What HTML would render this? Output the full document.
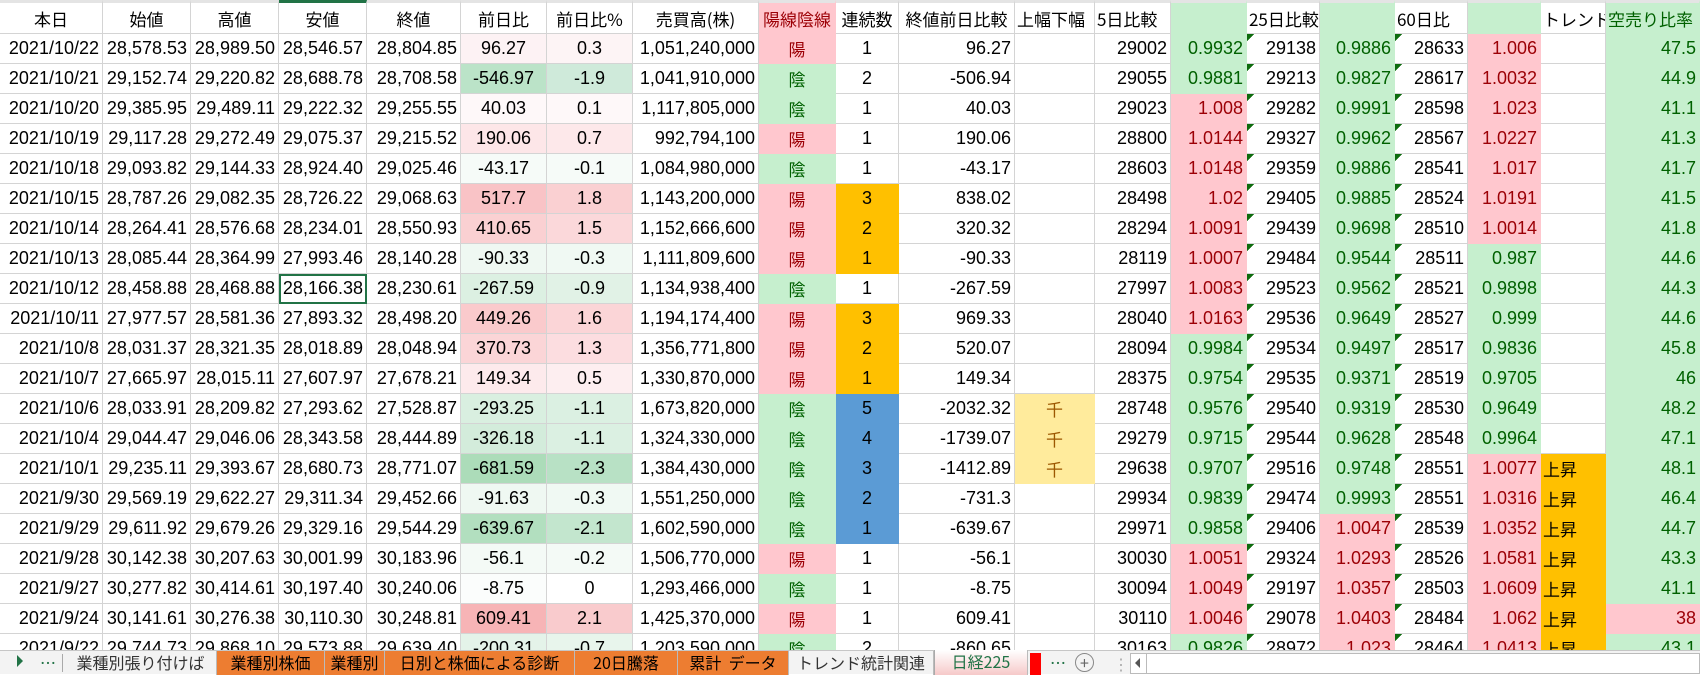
<!DOCTYPE html>
<html><head><meta charset="utf-8"><style>
*{margin:0;padding:0;box-sizing:border-box}
body{width:1700px;height:674px;overflow:hidden;background:#fff;font-family:"Liberation Sans","Noto Sans CJK JP",sans-serif;font-size:18px;color:#000;position:relative}
#wrap{position:absolute;left:0;top:0;width:1700px;height:650px;overflow:hidden}
table{border-collapse:separate;border-spacing:0;table-layout:fixed;width:1700px}
td{border-right:1px solid #d4d4d4;border-bottom:1px solid #d4d4d4;height:30px;text-align:right;padding:0 3px 0 0;white-space:nowrap;overflow:hidden;font-family:"Liberation Sans","Noto Sans CJK JP",sans-serif}
tr.h td{height:34px;border-top:3px solid #e4e4e4;text-align:center;padding:0;font-family:"Noto Sans CJK JP",sans-serif;font-size:17px}
tr.h td.l{text-align:left;padding-left:2px}
.c{text-align:center;padding:0}
.p{background:#ffc7ce;color:#9c0006;border-color:#ffc7ce}
.g{background:#c6efce;color:#006100;border-color:#c6efce}
.o{background:#ffc000;border-color:#ffc000}
.b{background:#5b9bd5;border-color:#5b9bd5}
.y{background:#ffeb9c;color:#9c5700;border-color:#ffeb9c}
.j{font-family:"Noto Sans CJK JP",sans-serif;font-size:17px}
.t{background-image:linear-gradient(135deg,#0e6b0e 5px,transparent 5px);background-repeat:no-repeat;background-size:8px 8px}
.sel{outline:2px solid #217346;outline-offset:-2px}
#tabs{position:absolute;left:0;top:650px;width:1700px;height:24px;background:#f3f3f3;border-top:1px solid #c6c6c6;font-family:"Noto Sans CJK JP",sans-serif;font-size:16px}
.tab{position:absolute;top:0;height:24px;line-height:22px;text-align:center;border-right:1px solid #bbb;color:#333}
.or{background:#ed7d31;color:#000}
</style></head><body>
<div id="wrap"><table>
<colgroup><col style="width:103px"><col style="width:88px"><col style="width:88px"><col style="width:88px"><col style="width:94px"><col style="width:86px"><col style="width:86px"><col style="width:126px"><col style="width:77px"><col style="width:63px"><col style="width:116px"><col style="width:80px"><col style="width:76px"><col style="width:76px"><col style="width:73px"><col style="width:75px"><col style="width:73px"><col style="width:73px"><col style="width:65px"><col style="width:94px"></colgroup>
<tr class="h"><td>本日</td><td>始値</td><td>高値</td><td style="border-top-color:#217346">安値</td><td>終値</td><td>前日比</td><td>前日比%</td><td>売買高(株)</td><td class="p">陽線陰線</td><td>連続数</td><td>終値前日比較</td><td class="l">上幅下幅</td><td class="l">5日比較</td><td class="g"></td><td class="l">25日比較</td><td class="g"></td><td class="l">60日比</td><td class="g"></td><td class="l">トレンド</td><td class="g l">空売り比率</td></tr>
<tr><td>2021/10/22</td><td>28,578.53</td><td>28,989.50</td><td>28,546.57</td><td>28,804.85</td><td class="c" style="background:#fdf2f4">96.27</td><td class="c" style="background:#fdf4f5">0.3</td><td>1,051,240,000</td><td class="p c j">陽</td><td class="c">1</td><td>96.27</td><td></td><td>29002</td><td class="g">0.9932</td><td class="t">29138</td><td class="g">0.9886</td><td class="t">28633</td><td class="p">1.006</td><td></td><td class="g">47.5</td></tr>
<tr><td>2021/10/21</td><td>29,152.74</td><td>29,220.82</td><td>28,688.78</td><td>28,708.58</td><td class="c" style="background:#bbe3c8">-546.97</td><td class="c" style="background:#cfeada">-1.9</td><td>1,041,910,000</td><td class="g c j">陰</td><td class="c">2</td><td>-506.94</td><td></td><td>29055</td><td class="g">0.9881</td><td class="t">29213</td><td class="g">0.9827</td><td class="t">28617</td><td class="p">1.0032</td><td></td><td class="g">44.9</td></tr>
<tr><td>2021/10/20</td><td>29,385.95</td><td>29,489.11</td><td>29,222.32</td><td>29,255.55</td><td class="c" style="background:#fef8f9">40.03</td><td class="c" style="background:#fef8f9">0.1</td><td>1,117,805,000</td><td class="g c j">陰</td><td class="c">1</td><td>40.03</td><td></td><td>29023</td><td class="p">1.008</td><td class="t">29282</td><td class="g">0.9991</td><td class="t">28598</td><td class="p">1.023</td><td></td><td class="g">41.1</td></tr>
<tr><td>2021/10/19</td><td>29,117.28</td><td>29,272.49</td><td>29,075.37</td><td>29,215.52</td><td class="c" style="background:#fde6e8">190.06</td><td class="c" style="background:#fde8ea">0.7</td><td>992,794,100</td><td class="p c j">陽</td><td class="c">1</td><td>190.06</td><td></td><td>28800</td><td class="p">1.0144</td><td class="t">29327</td><td class="g">0.9962</td><td class="t">28567</td><td class="p">1.0227</td><td></td><td class="g">41.3</td></tr>
<tr><td>2021/10/18</td><td>29,093.82</td><td>29,144.33</td><td>28,924.40</td><td>29,025.46</td><td class="c" style="background:#f6fbf8">-43.17</td><td class="c" style="background:#f6fbf8">-0.1</td><td>1,084,980,000</td><td class="g c j">陰</td><td class="c">1</td><td>-43.17</td><td></td><td>28603</td><td class="p">1.0148</td><td class="t">29359</td><td class="g">0.9886</td><td class="t">28541</td><td class="p">1.017</td><td></td><td class="g">41.7</td></tr>
<tr><td>2021/10/15</td><td>28,787.26</td><td>29,082.35</td><td>28,726.22</td><td>29,068.63</td><td class="c" style="background:#f9c3c6">517.7</td><td class="c" style="background:#fad0d2">1.8</td><td>1,143,200,000</td><td class="p c j">陽</td><td class="o c">3</td><td>838.02</td><td></td><td>28498</td><td class="p">1.02</td><td class="t">29405</td><td class="g">0.9885</td><td class="t">28524</td><td class="p">1.0191</td><td></td><td class="g">41.5</td></tr>
<tr><td>2021/10/14</td><td>28,264.41</td><td>28,576.68</td><td>28,234.01</td><td>28,550.93</td><td class="c" style="background:#fad0d2">410.65</td><td class="c" style="background:#fbd8da">1.5</td><td>1,152,666,600</td><td class="p c j">陽</td><td class="o c">2</td><td>320.32</td><td></td><td>28294</td><td class="p">1.0091</td><td class="t">29439</td><td class="g">0.9698</td><td class="t">28510</td><td class="p">1.0014</td><td></td><td class="g">41.8</td></tr>
<tr><td>2021/10/13</td><td>28,085.44</td><td>28,364.99</td><td>27,993.46</td><td>28,140.28</td><td class="c" style="background:#eff8f2">-90.33</td><td class="c" style="background:#f0f9f3">-0.3</td><td>1,111,809,600</td><td class="p c j">陽</td><td class="o c">1</td><td>-90.33</td><td></td><td>28119</td><td class="p">1.0007</td><td class="t">29484</td><td class="g">0.9544</td><td class="t">28511</td><td class="g">0.987</td><td></td><td class="g">44.6</td></tr>
<tr><td>2021/10/12</td><td>28,458.88</td><td>28,468.88</td><td class="sel">28,166.38</td><td>28,230.61</td><td class="c" style="background:#dcf0e2">-267.59</td><td class="c" style="background:#e1f2e6">-0.9</td><td>1,134,938,400</td><td class="g c j">陰</td><td class="c">1</td><td>-267.59</td><td></td><td>27997</td><td class="p">1.0083</td><td class="t">29523</td><td class="g">0.9562</td><td class="t">28521</td><td class="g">0.9898</td><td></td><td class="g">44.3</td></tr>
<tr><td>2021/10/11</td><td>27,977.57</td><td>28,581.36</td><td>27,893.32</td><td>28,498.20</td><td class="c" style="background:#facacc">449.26</td><td class="c" style="background:#fbd5d7">1.6</td><td>1,194,174,400</td><td class="p c j">陽</td><td class="o c">3</td><td>969.33</td><td></td><td>28040</td><td class="p">1.0163</td><td class="t">29536</td><td class="g">0.9649</td><td class="t">28527</td><td class="g">0.999</td><td></td><td class="g">44.6</td></tr>
<tr><td>2021/10/8</td><td>28,031.37</td><td>28,321.35</td><td>28,018.89</td><td>28,048.94</td><td class="c" style="background:#fbd5d7">370.73</td><td class="c" style="background:#fcdde0">1.3</td><td>1,356,771,800</td><td class="p c j">陽</td><td class="o c">2</td><td>520.07</td><td></td><td>28094</td><td class="g">0.9984</td><td class="t">29534</td><td class="g">0.9497</td><td class="t">28517</td><td class="g">0.9836</td><td></td><td class="g">45.8</td></tr>
<tr><td>2021/10/7</td><td>27,665.97</td><td>28,015.11</td><td>27,607.97</td><td>27,678.21</td><td class="c" style="background:#fdeaec">149.34</td><td class="c" style="background:#fdeef0">0.5</td><td>1,330,870,000</td><td class="p c j">陽</td><td class="o c">1</td><td>149.34</td><td></td><td>28375</td><td class="g">0.9754</td><td class="t">29535</td><td class="g">0.9371</td><td class="t">28519</td><td class="g">0.9705</td><td></td><td class="g">46</td></tr>
<tr><td>2021/10/6</td><td>28,033.91</td><td>28,209.82</td><td>27,293.62</td><td>27,528.87</td><td class="c" style="background:#d9efe0">-293.25</td><td class="c" style="background:#dbf0e2">-1.1</td><td>1,673,820,000</td><td class="g c j">陰</td><td class="b c">5</td><td>-2032.32</td><td class="y c j">千</td><td>28748</td><td class="g">0.9576</td><td class="t">29540</td><td class="g">0.9319</td><td class="t">28530</td><td class="g">0.9649</td><td></td><td class="g">48.2</td></tr>
<tr><td>2021/10/4</td><td>29,044.47</td><td>29,046.06</td><td>28,343.58</td><td>28,444.89</td><td class="c" style="background:#d3ecdb">-326.18</td><td class="c" style="background:#dbf0e2">-1.1</td><td>1,324,330,000</td><td class="g c j">陰</td><td class="b c">4</td><td>-1739.07</td><td class="y c j">千</td><td>29279</td><td class="g">0.9715</td><td class="t">29544</td><td class="g">0.9628</td><td class="t">28548</td><td class="g">0.9964</td><td></td><td class="g">47.1</td></tr>
<tr><td>2021/10/1</td><td>29,235.11</td><td>29,393.67</td><td>28,680.73</td><td>28,771.07</td><td class="c" style="background:#acdcb9">-681.59</td><td class="c" style="background:#b8e1c5">-2.3</td><td>1,384,430,000</td><td class="g c j">陰</td><td class="b c">3</td><td>-1412.89</td><td class="y c j">千</td><td>29638</td><td class="g">0.9707</td><td class="t">29516</td><td class="g">0.9748</td><td class="t">28551</td><td class="p">1.0077</td><td class="o j" style="text-align:left;padding-left:2px">上昇</td><td class="g">48.1</td></tr>
<tr><td>2021/9/30</td><td>29,569.19</td><td>29,622.27</td><td>29,311.34</td><td>29,452.66</td><td class="c" style="background:#eff8f2">-91.63</td><td class="c" style="background:#f0f9f3">-0.3</td><td>1,551,250,000</td><td class="g c j">陰</td><td class="b c">2</td><td>-731.3</td><td></td><td>29934</td><td class="g">0.9839</td><td class="t">29474</td><td class="g">0.9993</td><td class="t">28551</td><td class="p">1.0316</td><td class="o j" style="text-align:left;padding-left:2px">上昇</td><td class="g">46.4</td></tr>
<tr><td>2021/9/29</td><td>29,611.92</td><td>29,679.26</td><td>29,329.16</td><td>29,544.29</td><td class="c" style="background:#b2dfbf">-639.67</td><td class="c" style="background:#c3e6ce">-2.1</td><td>1,602,590,000</td><td class="g c j">陰</td><td class="b c">1</td><td>-639.67</td><td></td><td>29971</td><td class="g">0.9858</td><td class="t">29406</td><td class="p">1.0047</td><td class="t">28539</td><td class="p">1.0352</td><td class="o j" style="text-align:left;padding-left:2px">上昇</td><td class="g">44.7</td></tr>
<tr><td>2021/9/28</td><td>30,142.38</td><td>30,207.63</td><td>30,001.99</td><td>30,183.96</td><td class="c" style="background:#f4faf6">-56.1</td><td class="c" style="background:#f4faf6">-0.2</td><td>1,506,770,000</td><td class="p c j">陽</td><td class="c">1</td><td>-56.1</td><td></td><td>30030</td><td class="p">1.0051</td><td class="t">29324</td><td class="p">1.0293</td><td class="t">28526</td><td class="p">1.0581</td><td class="o j" style="text-align:left;padding-left:2px">上昇</td><td class="g">43.3</td></tr>
<tr><td>2021/9/27</td><td>30,277.82</td><td>30,414.61</td><td>30,197.40</td><td>30,240.06</td><td class="c" style="background:#fbfdfc">-8.75</td><td class="c">0</td><td>1,293,466,000</td><td class="g c j">陰</td><td class="c">1</td><td>-8.75</td><td></td><td>30094</td><td class="p">1.0049</td><td class="t">29197</td><td class="p">1.0357</td><td class="t">28503</td><td class="p">1.0609</td><td class="o j" style="text-align:left;padding-left:2px">上昇</td><td class="g">41.1</td></tr>
<tr><td>2021/9/24</td><td>30,141.61</td><td>30,276.38</td><td>30,110.30</td><td>30,248.81</td><td class="c" style="background:#f7b4b6">609.41</td><td class="c" style="background:#f9cbcd">2.1</td><td>1,425,370,000</td><td class="p c j">陽</td><td class="c">1</td><td>609.41</td><td></td><td>30110</td><td class="p">1.0046</td><td class="t">29078</td><td class="p">1.0403</td><td class="t">28484</td><td class="p">1.062</td><td class="o j" style="text-align:left;padding-left:2px">上昇</td><td class="p">38</td></tr>
<tr><td>2021/9/22</td><td>29,744.73</td><td>29,868.10</td><td>29,573.88</td><td>29,639.40</td><td class="c" style="background:#e4f3e9">-200.31</td><td class="c" style="background:#e8f5ec">-0.7</td><td>1,203,590,000</td><td class="g c j">陰</td><td class="c">2</td><td>-860.65</td><td></td><td>30163</td><td class="g">0.9826</td><td class="t">28972</td><td class="p">1.023</td><td class="t">28464</td><td class="p">1.0413</td><td class="o j" style="text-align:left;padding-left:2px">上昇</td><td class="g">43.1</td></tr>
</table></div>
<div id="tabs">
<div style="position:absolute;left:17px;top:4px;width:0;height:0;border-left:6px solid #217346;border-top:6px solid transparent;border-bottom:6px solid transparent"></div>
<div style="position:absolute;left:40px;top:0;line-height:22px;color:#217346">…</div>
<div style="position:absolute;left:62px;top:3px;width:1px;height:18px;background:#aaa"></div>
<div class="tab" style="left:65px;width:152px">業種別張り付けば</div>
<div class="tab or" style="left:217px;width:108px">業種別株価</div>
<div class="tab or" style="left:325px;width:60px">業種別</div>
<div class="tab or" style="left:385px;width:190px">日別と株価による診断</div>
<div class="tab or" style="left:575px;width:103px">20日騰落</div>
<div class="tab or" style="left:678px;width:111px">累計&nbsp; データ</div>
<div class="tab" style="left:789px;width:145px">トレンド統計関連</div>
<div class="tab" style="left:934px;width:94px;top:-1px;height:25px;background:linear-gradient(#fff,#f6c9c9);color:#217346;border-left:1px solid #aaa">日経225</div>
<div style="position:absolute;left:1030px;top:2px;width:11px;height:22px;background:#f00"></div>
<div style="position:absolute;left:1050px;top:0;line-height:22px;color:#217346">…</div>
<div style="position:absolute;left:1075px;top:2px;width:19px;height:19px;border:1px solid #888;border-radius:50%;text-align:center;line-height:16px;color:#666;font-size:16px">+</div>
<div style="position:absolute;left:1113px;top:3px;color:#aaa;line-height:18px">⋮</div>
<div style="position:absolute;left:1130px;top:2px;width:570px;height:21px;background:#fff;border:1px solid #bbb"></div>
<div style="position:absolute;left:1135px;top:7px;width:0;height:0;border-right:5px solid #555;border-top:5px solid transparent;border-bottom:5px solid transparent"></div>
<div style="position:absolute;left:1146px;top:3px;width:1px;height:19px;background:#bbb"></div>
</div>
</body></html>
